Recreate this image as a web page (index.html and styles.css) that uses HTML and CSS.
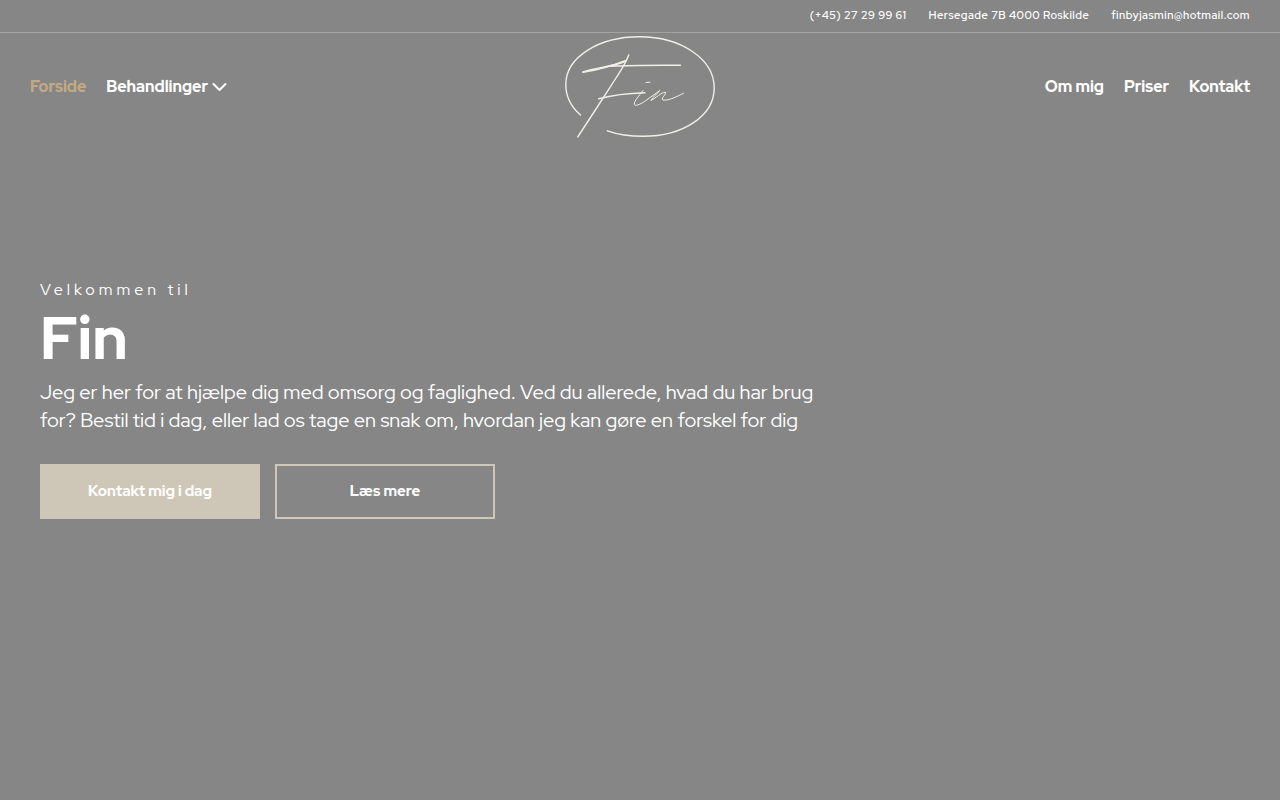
FILE: index.html
```
<!DOCTYPE html>
<html lang="da">
<head>
    <meta charset="UTF-8">
    <meta name="viewport" content="width=device-width, initial-scale=1.0">
    <title>Fin</title>
    <link rel="stylesheet" href="styles.css">
</head>
<body>

    <div class="topbar">
        <a href="tel:+4527299961">(+45) 27 29 99 61</a>
        <a href="#adresse">Hersegade 7B 4000 Roskilde</a>
        <a href="mailto:finbyjasmin@hotmail.com">finbyjasmin@hotmail.com</a>
    </div>

    <header class="header">
        <nav class="menu">
            <a href="#" class="active">Forside</a>
            <a href="#behandlinger" class="dropdown">Behandlinger
                <svg class="chevron" viewBox="0 0 16 10" aria-hidden="true"><path d="M1.5 2 L7.5 8 L13.5 2"/></svg>
            </a>
        </nav>

        <a href="#" class="logo" aria-label="Fin">
            <svg viewBox="0 0 150 102" aria-hidden="true">
                <!-- oval -->
                <path d="M15.5 79 C5 70 .8 59 .8 48.5 C.8 21 34 .8 74.5 .8 C116 .8 149.2 23 149.2 52 C149.2 80 118 100.3 78 100.3 C65 100.3 53 98.5 42.3 94.8"/>
                <!-- F -->
                <path d="M63.7 19 C61 27 56 34 51 42 L31 73 L12.7 101"/>
                <path class="bold" d="M18 36.3 C32 34 47 30 61 24.5"/>
                <path d="M18 35.8 C32 31.5 48 30.5 60 25.5 M46 30.3 C68 29 92 29.3 115.5 29.3"/>
                <path d="M33.7 62.8 C46 59.5 62 57.3 80 56.8"/>
                <!-- in -->
                <path class="thin" d="M78 54.5 C74 60 69 65 69.3 68.3 C70 71.5 79 66.5 85 61.5 L94.5 54.8"/>
                <path class="thin" d="M94.5 54.8 C92 58 88 61 86 64.5 C91 62 96 56.5 100.5 56.2 C101.5 58.5 96.5 61 97.5 63.8 C102 65.5 111 61 118.5 57.3"/>
                <path class="thin" d="M81 46.5 L85 46.2"/>
            </svg>
        </a>

        <nav class="menu menu-right">
            <a href="#om-mig">Om mig</a>
            <a href="#priser">Priser</a>
            <a href="#kontakt">Kontakt</a>
        </nav>
    </header>

    <main class="hero">
        <p class="intro">Velkommen til</p>
        <h1>Fin</h1>
        <p class="text">Jeg er her for at hjælpe dig med omsorg og faglighed. Ved du allerede, hvad du har brug for? Bestil tid i dag, eller lad os tage en snak om, hvordan jeg kan gøre en forskel for dig</p>
        <div class="buttons">
            <button type="button" class="btn btn-filled">Kontakt mig i dag</button>
            <button type="button" class="btn">Læs mere</button>
        </div>
    </main>

</body>
</html>
```
FILE: styles.css
```
* {
    box-sizing: border-box;
}
body {
    margin: 0;
    min-height: 100vh;
    background-color: #868686;
    color: white;
    font-family: "Red Hat Display", Inter, sans-serif;
}
a {
    color: inherit;
    text-decoration: none;
}
.topbar {
    display: flex;
    justify-content: flex-end;
    gap: 22px;
    padding: 7px 30px 9px;
    border-bottom: 1px solid #a3a3a3;
    font-size: 11px;
    line-height: 16px;
    font-weight: 600;
    letter-spacing: 0.5px;
}
.header {
    display: grid;
    grid-template-columns: 1fr 150px 1fr;
    align-items: center;
    padding: 3px 30px;
}
.menu {
    display: flex;
    gap: 20px;
    font-size: 16px;
    line-height: 24px;
    font-weight: 800;
}
.menu-right {
    justify-content: flex-end;
}
.active {
    color: #c4aa82;
}
.dropdown {
    display: flex;
    align-items: center;
    gap: 4px;
}
.logo svg {
    display: block;
    width: 100%;
    fill: none;
    stroke: #f0efe8;
    stroke-width: 1.4;
    stroke-linecap: round;
    stroke-linejoin: round;
}
.logo .bold {
    stroke-width: 1.6;
}
.logo .thin {
    stroke-width: 1;
}
.chevron {
    width: 16px;
    height: 10px;
    fill: none;
    stroke: white;
    stroke-width: 2;
    stroke-linecap: round;
    stroke-linejoin: round;
}
.hero {
    max-width: 880px;
    padding: 137px 40px 40px;
}
.intro {
    margin: 0;
    font-size: 16px;
    line-height: 24px;
    font-weight: 400;
    letter-spacing: 4px;
}
h1 {
    margin: 0 0 4px;
    font-size: 60px;
    line-height: 72px;
    font-weight: 800;
}
.text {
    margin: 0 0 30px;
    font-size: 20px;
    line-height: 28px;
    font-weight: 400;
}
.buttons {
    display: flex;
    flex-wrap: wrap;
    gap: 15px;
}
.btn {
    width: 220px;
    height: 55px;
    padding: 0 0 2px;
    border: 2px solid #cec6b6;
    background: transparent;
    color: white;
    font-family: inherit;
    font-size: 15px;
    font-weight: 800;
    cursor: pointer;
}
.btn-filled {
    background: #cec6b6;
}
```
